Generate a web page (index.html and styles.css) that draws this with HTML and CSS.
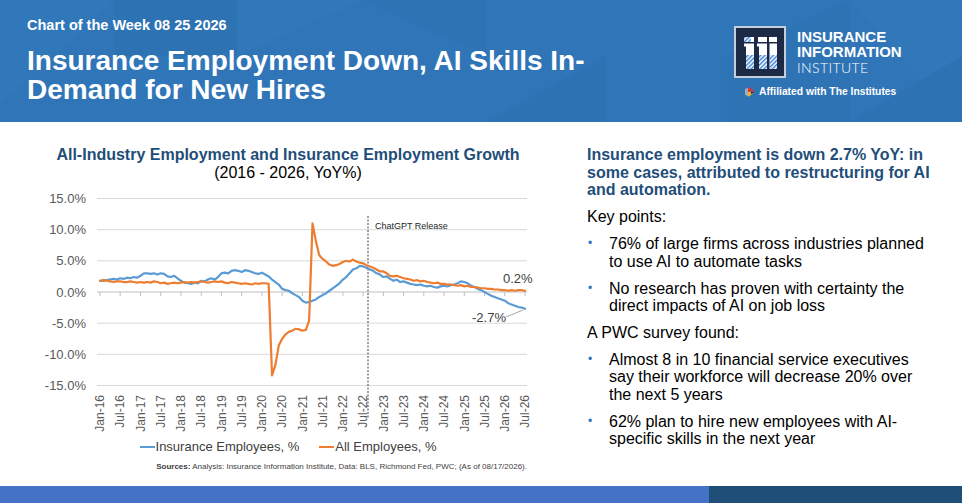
FILE: index.html
```html
<!DOCTYPE html>
<html lang="en">
<head>
<meta charset="utf-8">
<title>Chart of the Week 08 25 2026</title>
<link rel="stylesheet" href="styles.css">
</head>
<body>
<div class="slide">
  <header class="hero">
    <svg class="hero-bg" viewBox="0 0 962 122" preserveAspectRatio="none" aria-hidden="true">
      <polygon class="f-l1" points="0,0 115,0 0,105"/>
      <polygon class="f-d1" points="115,0 237,0 237,56 115,56"/>
      <polygon class="f-l2" points="115,56 237,56 115,122"/>
      <polygon class="f-l1" points="237,0 363,0 237,56"/>
      <polygon class="f-d2" points="363,0 486,0 486,56"/>
      <polygon class="f-d1" points="486,122 605,56 605,122"/>
      <polygon class="f-l2" points="605,0 727,0 605,56"/>
      <polygon class="f-d2" points="727,56 850,0 850,122 727,122"/>
      <polygon class="f-l1" points="850,0 962,0 962,122"/>
      <polygon class="f-d1" points="850,122 962,56 962,122"/>
    </svg>
    <div class="hero-text">
      <div class="kicker">Chart of the Week 08 25 2026</div>
      <h1 class="title">Insurance Employment Down, AI Skills In-Demand for New Hires</h1>
    </div>
    <div class="brand">
      <div class="brand-row">
        <div class="mark">
          <svg viewBox="0 0 48 48" aria-hidden="true">
            <defs>
              <pattern id="hatch" patternUnits="userSpaceOnUse" width="3" height="3" patternTransform="rotate(45)">
                <rect width="1.5" height="3" fill="#3f82d6"/>
              </pattern>
              <clipPath id="iii">
                <rect x="8" y="9" width="10" height="5"/>
                <rect x="10" y="15.5" width="8" height="25.5"/>
                <rect x="8" y="15.5" width="3" height="3"/>
                <rect x="22" y="9" width="9" height="5"/>
                <rect x="23" y="15.5" width="8" height="25.5"/>
                <rect x="21" y="15.5" width="3" height="3"/>
                <rect x="33" y="9" width="8" height="5"/>
                <rect x="33.5" y="15.5" width="7.5" height="25.5"/>
              </clipPath>
            </defs>
            <g clip-path="url(#iii)">
              <rect x="0" y="0" width="48" height="48" fill="#ffffff"/>
              <rect x="0" y="27" width="48" height="15" fill="url(#hatch)"/>
              <rect x="0" y="8" width="15" height="7" fill="url(#hatch)"/>
            </g>
          </svg>
        </div>
        <div class="wordmark">
          <span class="wm-bold">INSURANCE</span>
          <span class="wm-bold">INFORMATION</span>
          <span class="wm-light">INSTITUTE</span>
        </div>
      </div>
      <div class="affil">
        <svg class="affil-icon" viewBox="0 0 11 12" aria-hidden="true">
          <polygon points="0,3 3,2 3,10 0,9" fill="#a3abb5"/>
          <polygon points="3,1 10,5 3,6" fill="#d8372c"/>
          <polygon points="3,6 10,6 3,11" fill="#f1b431"/>
          <polygon points="6,6 10,6 6,8" fill="#1c2a46"/>
        </svg>
        <span>Affiliated with The Institutes</span>
      </div>
    </div>
  </header>

  <main class="content">
    <section class="chart">
      <h2 class="chart-title">All-Industry Employment and Insurance Employment Growth</h2>
      <div class="chart-sub">(2016 - 2026, YoY%)</div>
      <svg class="plot" viewBox="36 185 504 252" width="504" height="252" role="img" aria-label="Employment growth chart">
        <g class="grid">
          <line x1="97" x2="527" y1="198.5" y2="198.5"/>
          <line x1="97" x2="527" y1="229.7" y2="229.7"/>
          <line x1="97" x2="527" y1="260.8" y2="260.8"/>
          <line x1="97" x2="527" y1="323.2" y2="323.2"/>
          <line x1="97" x2="527" y1="354.3" y2="354.3"/>
          <line x1="97" x2="527" y1="385.5" y2="385.5"/>
        </g>
        <line class="axis" x1="97" x2="527" y1="292" y2="292"/>
        <path class="ticks" d="M100 292v4M120.2 292v4M140.5 292v4M160.7 292v4M181 292v4M201.2 292v4M221.4 292v4M241.7 292v4M261.9 292v4M282.2 292v4M302.4 292v4M322.6 292v4M342.9 292v4M363.1 292v4M383.4 292v4M403.6 292v4M423.8 292v4M444.1 292v4M464.3 292v4M484.6 292v4M504.8 292v4M525 292v4"/>
        <g class="ylab">
          <text x="86" y="203.1">15.0%</text>
          <text x="86" y="234.3">10.0%</text>
          <text x="86" y="265.4">5.0%</text>
          <text x="86" y="296.6">0.0%</text>
          <text x="86" y="327.8">-5.0%</text>
          <text x="86" y="358.9">-10.0%</text>
          <text x="86" y="390.1">-15.0%</text>
        </g>
        <g class="xlab">
          <text transform="translate(104.2 395) rotate(-90)">Jan-16</text>
          <text transform="translate(124.4 395) rotate(-90)">Jul-16</text>
          <text transform="translate(144.7 395) rotate(-90)">Jan-17</text>
          <text transform="translate(164.9 395) rotate(-90)">Jul-17</text>
          <text transform="translate(185.2 395) rotate(-90)">Jan-18</text>
          <text transform="translate(205.4 395) rotate(-90)">Jul-18</text>
          <text transform="translate(225.6 395) rotate(-90)">Jan-19</text>
          <text transform="translate(245.9 395) rotate(-90)">Jul-19</text>
          <text transform="translate(266.1 395) rotate(-90)">Jan-20</text>
          <text transform="translate(286.4 395) rotate(-90)">Jul-20</text>
          <text transform="translate(306.6 395) rotate(-90)">Jan-21</text>
          <text transform="translate(326.8 395) rotate(-90)">Jul-21</text>
          <text transform="translate(347.1 395) rotate(-90)">Jan-22</text>
          <text transform="translate(367.3 395) rotate(-90)">Jul-22</text>
          <text transform="translate(387.6 395) rotate(-90)">Jan-23</text>
          <text transform="translate(407.8 395) rotate(-90)">Jul-23</text>
          <text transform="translate(428 395) rotate(-90)">Jan-24</text>
          <text transform="translate(448.3 395) rotate(-90)">Jul-24</text>
          <text transform="translate(468.5 395) rotate(-90)">Jan-25</text>
          <text transform="translate(488.8 395) rotate(-90)">Jul-25</text>
          <text transform="translate(509 395) rotate(-90)">Jan-26</text>
          <text transform="translate(529.2 395) rotate(-90)">Jul-26</text>
        </g>
        <line class="release" x1="368" x2="368" y1="216" y2="419"/>
        <text class="release-label" x="375" y="229">ChatGPT Release</text>
        <g transform="translate(100 292) scale(3.373 -6.233)">
          <polyline class="s-ins" points="0,1.8 1,1.8 2,1.9 3,2.0 4,2.1 5,2.0 6,2.2 7,2.1 8,2.3 9,2.2 10,2.4 11,2.3 12,2.6 13,3.0 14,3.0 15,2.9 16,3.0 17,2.8 18,3.0 19,2.9 20,2.5 21,2.4 22,2.6 23,2.2 24,1.8 25,1.5 26,1.4 27,1.3 28,1.5 29,1.4 30,1.8 31,1.7 32,2.0 33,2.2 34,2.0 35,2.4 36,3.0 37,3.1 38,3.0 39,3.4 40,3.5 41,3.4 42,3.2 43,3.5 44,3.4 45,3.2 46,3.0 47,2.9 48,3.1 49,2.8 50,2.5 51,2.0 52,1.6 53,1.2 54,0.5 55,0.3 56,0.2 57,-0.2 58,-0.5 59,-0.8 60,-1.4 61,-1.7 62,-1.6 63,-1.4 64,-1.2 65,-0.8 66,-0.5 67,-0.2 68,0.2 69,0.6 70,1.0 71,1.4 72,2.0 73,2.4 74,3.0 75,3.6 76,3.8 77,4.2 78,4.1 79,3.9 80,3.6 81,3.4 82,3.0 83,2.8 84,2.4 85,2.5 86,2.1 87,1.8 88,2.0 89,1.6 90,1.7 91,1.5 92,1.3 93,1.2 94,1.1 95,1.2 96,1.0 97,0.9 98,1.0 99,0.8 100,0.7 101,0.9 102,1.0 103,0.9 104,1.1 105,1.2 106,1.4 107,1.7 108,1.6 109,1.4 110,1.0 111,0.8 112,0.5 113,0.3 114,0.0 115,-0.3 116,-0.6 117,-0.8 118,-1.0 119,-1.2 120,-1.4 121,-1.8 122,-2.0 123,-2.2 124,-2.4 125,-2.5 126,-2.7"/>
          <polyline class="s-all" points="0,1.8 1,1.9 2,1.8 3,1.7 4,1.6 5,1.7 6,1.7 7,1.6 8,1.6 9,1.7 10,1.6 11,1.5 12,1.6 13,1.5 14,1.6 15,1.5 16,1.7 17,1.6 18,1.4 19,1.5 20,1.3 21,1.4 22,1.5 23,1.4 24,1.5 25,1.6 26,1.5 27,1.6 28,1.5 29,1.6 30,1.7 31,1.6 32,1.5 33,1.6 34,1.7 35,1.6 36,1.7 37,1.5 38,1.4 39,1.6 40,1.5 41,1.4 42,1.3 43,1.4 44,1.3 45,1.2 46,1.4 47,1.3 48,1.4 49,1.4 50,1.3 51,-13.4 52,-11.7 53,-8.6 54,-7.5 55,-6.8 56,-6.4 57,-6.2 58,-5.9 59,-6.0 60,-6.2 61,-6.1 62,-4.6 63,11.0 64,8.2 65,5.9 66,5.3 67,4.9 68,4.4 69,4.2 70,4.3 71,4.5 72,4.8 73,5.0 74,4.9 75,5.2 76,4.9 77,4.7 78,4.6 79,4.3 80,4.1 81,3.9 82,3.6 83,3.3 84,3.3 85,3.0 86,2.6 87,2.5 88,2.6 89,2.4 90,2.2 91,2.1 92,2.0 93,1.8 94,1.9 95,1.7 96,1.8 97,1.6 98,1.5 99,1.4 100,1.5 101,1.3 102,1.3 103,1.2 104,1.2 105,1.1 106,1.0 107,1.1 108,0.9 109,1.0 110,0.8 111,0.8 112,0.7 113,0.6 114,0.6 115,0.5 116,0.5 117,0.4 118,0.4 119,0.3 120,0.3 121,0.2 122,0.3 123,0.2 124,0.3 125,0.3 126,0.2"/>
        </g>
        <text class="ann" x="503" y="282.5">0.2%</text>
        <text class="ann" x="472" y="321.5">-2.7%</text>
        <line class="leader" x1="506" y1="317" x2="523" y2="310"/>
      </svg>
      <div class="legend">
        <span class="legend-item"><span class="swatch swatch-ins"></span>Insurance Employees, %</span>
        <span class="legend-item"><span class="swatch swatch-all"></span>All Employees, %</span>
      </div>
      <div class="sources"><b>Sources:</b> Analysis: Insurance Information Institute, Data: BLS, Richmond Fed, PWC; (As of 08/17/2026).</div>
    </section>

    <section class="notes">
      <h3 class="notes-head">Insurance employment is down 2.7% YoY: in some cases, attributed to restructuring for AI and automation.</h3>
      <p class="notes-p">Key points:</p>
      <ul class="notes-list">
        <li><span class="dot">•</span><span class="li-text">76% of large firms across industries planned to use AI to automate tasks</span></li>
        <li><span class="dot">•</span><span class="li-text">No research has proven with certainty the direct impacts of AI on job loss</span></li>
      </ul>
      <p class="notes-p">A PWC survey found:</p>
      <ul class="notes-list">
        <li><span class="dot">•</span><span class="li-text">Almost 8 in 10 financial service executives say their workforce will decrease 20% over the next 5 years</span></li>
        <li><span class="dot">•</span><span class="li-text">62% plan to hire new employees with AI-specific skills in the next year</span></li>
      </ul>
    </section>
  </main>

  <footer class="foot">
    <div class="foot-a"></div>
    <div class="foot-b"></div>
  </footer>
</div>
</body>
</html>
```

FILE: styles.css
```css
* { box-sizing: border-box; }

html, body {
  margin: 0;
  padding: 0;
}

body {
  width: 962px;
  height: 503px;
  overflow: hidden;
  background: #ffffff;
  color: #000000;
  font-family: "Liberation Sans", Arial, sans-serif;
}

.slide {
  width: 962px;
  height: 503px;
  display: flex;
  flex-direction: column;
}

/* ---------- header ---------- */
.hero {
  position: relative;
  flex: none;
  height: 122px;
  display: flex;
  background: #2f75b7;
  color: #ffffff;
}

.hero-bg {
  position: absolute;
  left: 0;
  top: 0;
  width: 100%;
  height: 100%;
}

.f-l1 { fill: #3178ba; }
.f-l2 { fill: #3077b9; }
.f-d1 { fill: #2d72b3; }
.f-d2 { fill: #2e73b4; }

.hero-text {
  position: relative;
  flex: none;
  width: 734px;
  padding: 16.5px 0 0 27px;
}

.kicker {
  font-size: 14.5px;
  font-weight: 700;
  line-height: 17px;
}

.title {
  margin: 12px 0 0;
  width: 600px;
  font-size: 28px;
  font-weight: 700;
  line-height: 29px;
}

.brand {
  position: relative;
  padding-top: 26px;
}

.brand-row {
  display: flex;
  gap: 11px;
}

.mark {
  flex: none;
  width: 52px;
  height: 52px;
  border: 2px solid #c5cedb;
  background: #1c2a46;
}

.mark svg {
  display: block;
  width: 48px;
  height: 48px;
}

.wordmark {
  display: flex;
  flex-direction: column;
  padding-top: 2.75px;
}

.wm-bold {
  font-size: 15px;
  font-weight: 700;
  line-height: 15.5px;
}

.wm-light {
  font-family: Lato, "Liberation Sans", sans-serif;
  font-weight: 300;
  font-size: 14px;
  letter-spacing: 0.4px;
  line-height: 15.5px;
}

.affil {
  display: flex;
  align-items: center;
  gap: 3px;
  margin: 8px 0 0 11px;
  font-size: 10.3px;
  font-weight: 700;
  line-height: 12px;
}

.affil-icon {
  width: 11px;
  height: 12px;
}

/* ---------- content ---------- */
.content {
  flex: 1;
  display: flex;
  overflow: hidden;
}

.chart {
  flex: none;
  width: 540px;
  padding: 24px 0 0 36px;
  text-align: center;
}

.chart-title {
  margin: 0;
  font-size: 16px;
  font-weight: 700;
  line-height: 18px;
  color: #1f4e79;
}

.chart-sub {
  font-size: 16px;
  line-height: 18px;
  color: #000000;
}

.plot {
  display: block;
  margin-top: 3px;
  width: 504px;
  height: 252px;
}

.plot text {
  font-family: "Liberation Sans", Arial, sans-serif;
}

.grid line {
  stroke: #d9d9d9;
  stroke-width: 1;
}

.axis {
  stroke: #bfbfbf;
  stroke-width: 1;
}

.ticks {
  stroke: #bfbfbf;
  stroke-width: 1;
  fill: none;
}

.ylab text {
  font-size: 13px;
  fill: #595959;
  text-anchor: end;
}

.xlab text {
  font-size: 12px;
  fill: #595959;
  text-anchor: end;
}

.release {
  stroke: #404040;
  stroke-width: 1;
  stroke-dasharray: 2 1.5;
}

.release-label {
  font-size: 9px;
  fill: #262626;
}

.s-ins,
.s-all {
  fill: none;
  stroke-width: 2.2;
  stroke-linejoin: round;
  stroke-linecap: round;
  vector-effect: non-scaling-stroke;
}

.s-ins { stroke: #5b9bd5; }
.s-all { stroke: #ed7d31; }

.ann {
  font-size: 13px;
  fill: #404040;
}

.leader {
  stroke: #a6a6a6;
  stroke-width: 1;
}

.legend {
  margin-top: 2px;
  display: flex;
  justify-content: center;
  gap: 20px;
  font-size: 13px;
  line-height: 16px;
  color: #404040;
}

.legend-item {
  display: flex;
  align-items: center;
}

.swatch {
  width: 15px;
  height: 2.5px;
  margin-right: 1px;
}

.swatch-ins { background: #5b9bd5; }
.swatch-all { background: #ed7d31; }

.sources {
  margin-top: 7px;
  padding-right: 13px;
  text-align: right;
  font-size: 8px;
  line-height: 10px;
  color: #404040;
}

/* ---------- notes ---------- */
.notes {
  flex: none;
  margin-left: 47px;
  width: 370px;
  padding-top: 24.3px;
  font-size: 16px;
  line-height: 17.4px;
}

.notes-head {
  margin: 0;
  width: 358px;
  font-size: 16px;
  font-weight: 700;
  line-height: 17.4px;
  color: #1f4e79;
}

.notes-p {
  margin: 9.6px 0 0;
}

.notes-list {
  list-style: none;
  margin: 0;
  padding: 0;
}

.notes-list li {
  display: flex;
  margin-top: 9.6px;
}

.dot {
  flex: none;
  width: 22px;
  padding-left: 1px;
  font-size: 12px;
  color: #2e75b6;
}

.li-text {
  width: 318px;
}

/* ---------- footer ---------- */
.foot {
  flex: none;
  height: 17px;
  display: flex;
}

.foot-a {
  width: 709px;
  background: #4472c4;
}

.foot-b {
  flex: 1;
  background: #1f4e79;
}
```
